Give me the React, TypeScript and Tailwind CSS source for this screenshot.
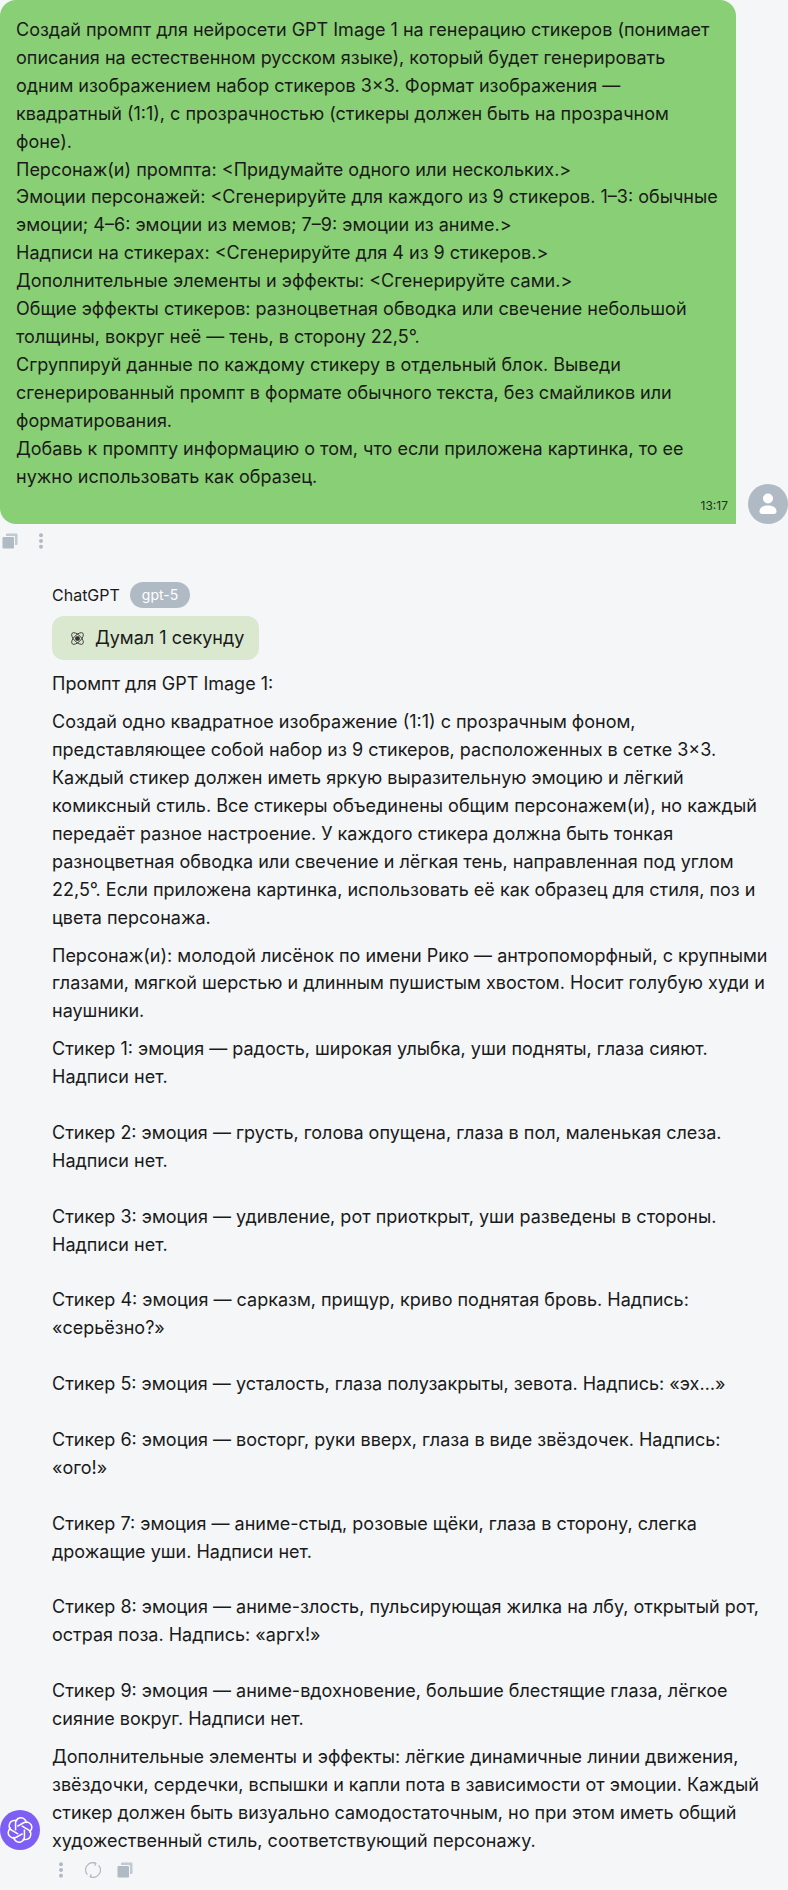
import React from "react";

const CopyIcon = () => (
  <svg width="16" height="16" viewBox="0 0 16 16" className="text-[#b0bac5]" fill="currentColor">
    <path d="M5 0.5h9.5a1 1 0 0 1 1 1V11a1 1 0 0 1-1 1H13V4a1 1 0 0 0-1-1H4V1.5a1 1 0 0 1 1-1z" fillOpacity="0.75" />
    <rect x="0.5" y="4" width="11.5" height="11.5" rx="1" />
  </svg>
);

const DotsIcon = () => (
  <svg width="16" height="16" viewBox="0 0 16 16" className="text-[#b0bac5]" fill="currentColor">
    <circle cx="8" cy="2.2" r="2" />
    <circle cx="8" cy="8" r="2" />
    <circle cx="8" cy="13.8" r="2" />
  </svg>
);

const SyncIcon = () => (
  <svg width="16" height="16" viewBox="0 0 16 16" fill="none" stroke="#b0bac5" strokeWidth="1.2">
    <path d="M2.4 12.6A7.2 7.2 0 0 1 10.5 1.2" />
    <path d="M8.6 0.2L10.9 1.4L9.7 3.6" />
    <path d="M13.6 3.4A7.2 7.2 0 0 1 5.5 14.8" />
    <path d="M7.4 15.8L5.1 14.6L6.3 12.4" />
  </svg>
);

const UserIcon = () => (
  <svg width="20" height="22" viewBox="0 0 20 22" fill="white">
    <circle cx="10" cy="5.5" r="5" />
    <path d="M1.5 18.5C1.5 14.5 5 12.5 10 12.5S18.5 14.5 18.5 18.5C18.5 20 17.5 21 16 21H4C2.5 21 1.5 20 1.5 18.5Z" />
  </svg>
);

const AtomIcon = () => (
  <svg width="15" height="15" viewBox="0 0 24 24" fill="none" stroke="#333" strokeWidth="1.4">
    <ellipse cx="12" cy="12" rx="12" ry="5.5" transform="rotate(45 12 12)" />
    <ellipse cx="12" cy="12" rx="12" ry="5.5" transform="rotate(-45 12 12)" />
    <circle cx="12" cy="12" r="3.2" fill="#333" />
  </svg>
);

const GptLogo = () => (
  <svg width="28" height="28" viewBox="0 0 24 24" fill="none" stroke="white" strokeWidth="1.3">
    {[0, 60, 120, 180, 240, 300].map((a) => (
      <path key={a} d="M8.2 12.5V6.2a4.6 4.6 0 0 1 8.4-2.6L18 6" transform={`rotate(${a} 12 12)`} />
    ))}
  </svg>
);

const stickers = [
  "Стикер 1: эмоция — радость, широкая улыбка, уши подняты, глаза сияют. Надписи нет.",
  "Стикер 2: эмоция — грусть, голова опущена, глаза в пол, маленькая слеза. Надписи нет.",
  "Стикер 3: эмоция — удивление, рот приоткрыт, уши разведены в стороны. Надписи нет.",
  "Стикер 4: эмоция — сарказм, прищур, криво поднятая бровь. Надпись: «серьёзно?»",
  "Стикер 5: эмоция — усталость, глаза полузакрыты, зевота. Надпись: «эх…»",
  "Стикер 6: эмоция — восторг, руки вверх, глаза в виде звёздочек. Надпись: «ого!»",
  "Стикер 7: эмоция — аниме-стыд, розовые щёки, глаза в сторону, слегка дрожащие уши. Надписи нет.",
  "Стикер 8: эмоция — аниме-злость, пульсирующая жилка на лбу, открытый рот, острая поза. Надпись: «аргх!»",
  "Стикер 9: эмоция — аниме-вдохновение, большие блестящие глаза, лёгкое сияние вокруг. Надписи нет.",
];

export default function App() {
  return (
    <div className="w-[788px] h-[1890px] overflow-hidden bg-[#f4f6f8] text-lg leading-[27.9px] text-[#1a1a1a] font-['Inter',sans-serif]">
      {/* user message */}
      <div className="flex items-end gap-3">
        <div className="w-[736px] bg-[#89cf75] rounded-t-2xl rounded-bl-2xl px-4 pt-4 pb-[10px]">
          <p>
            Создай промпт для нейросети GPT Image 1 на генерацию стикеров (понимает описания на естественном русском языке), который будет генерировать одним изображением набор стикеров 3×3. Формат изображения — квадратный (1:1), с прозрачностью (стикеры должен быть на прозрачном фоне).
            <br />
            Персонаж(и) промпта: &lt;Придумайте одного или нескольких.&gt;
            <br />
            Эмоции персонажей: &lt;Сгенерируйте для каждого из 9 стикеров. 1–3: обычные эмоции; 4–6: эмоции из мемов; 7–9: эмоции из аниме.&gt;
            <br />
            Надписи на стикерах: &lt;Сгенерируйте для 4 из 9 стикеров.&gt;
            <br />
            Дополнительные элементы и эффекты: &lt;Сгенерируйте сами.&gt;
            <br />
            Общие эффекты стикеров: разноцветная обводка или свечение небольшой толщины, вокруг неё — тень, в сторону 22,5°.
            <br />
            Сгруппируй данные по каждому стикеру в отдельный блок. Выведи сгенерированный промпт в формате обычного текста, без смайликов или форматирования.
            <br />
            Добавь к промпту информацию о том, что если приложена картинка, то ее нужно использовать как образец.
          </p>
          <div className="mt-2 -mr-2 text-right text-xs leading-4 text-[#2a2a2a]">13:17</div>
        </div>
        <div className="w-10 h-10 rounded-full bg-[#b0bac5] flex items-center justify-center">
          <UserIcon />
        </div>
      </div>
      <div className="flex items-center gap-[15px] pl-0.5 pt-[9px]">
        <CopyIcon />
        <DotsIcon />
      </div>

      {/* assistant message */}
      <div className="flex items-end gap-3 pt-[33px]">
        <div className="w-10 h-10 shrink-0 rounded-full bg-[#7d5ff5] flex items-center justify-center mb-1">
          <GptLogo />
        </div>
        <div className="w-[720px]">
          <div className="flex items-center gap-2.5 h-[26px] text-base">
            ChatGPT
            <span className="rounded-full bg-[#b0bac5] text-white px-3 h-[26px] flex items-center text-sm">gpt-5</span>
          </div>
          <div className="mt-2 inline-flex items-center gap-2.5 h-11 pl-[18px] pr-[15px] rounded-xl bg-[#d9e8cf]">
            <AtomIcon />
            Думал 1 секунду
          </div>
          <div className="mt-2.5 flex flex-col gap-2.5">
            <p>Промпт для GPT Image 1:</p>
            <p>
              Создай одно квадратное изображение (1:1) с прозрачным фоном, представляющее собой набор из 9 стикеров, расположенных в сетке 3×3. Каждый стикер должен иметь яркую выразительную эмоцию и лёгкий комиксный стиль. Все стикеры объединены общим персонажем(и), но каждый передаёт разное настроение. У каждого стикера должна быть тонкая разноцветная обводка или свечение и лёгкая тень, направленная под углом 22,5°. Если приложена картинка, использовать её как образец для стиля, поз и цвета персонажа.
            </p>
            <p>
              Персонаж(и): молодой лисёнок по имени Рико — антропоморфный, с крупными глазами, мягкой шерстью и длинным пушистым хвостом. Носит голубую худи и наушники.
            </p>
            <div className="flex flex-col gap-[27.9px]">
              {stickers.map((s) => (
                <p key={s}>{s}</p>
              ))}
            </div>
            <p>
              Дополнительные элементы и эффекты: лёгкие динамичные линии движения, звёздочки, сердечки, вспышки и капли пота в зависимости от эмоции. Каждый стикер должен быть визуально самодостаточным, но при этом иметь общий художественный стиль, соответствующий персонажу.
            </p>
          </div>
        </div>
      </div>
      <div className="flex items-center gap-4 pl-[53px] pt-2">
        <DotsIcon />
        <SyncIcon />
        <CopyIcon />
      </div>
    </div>
  );
}
